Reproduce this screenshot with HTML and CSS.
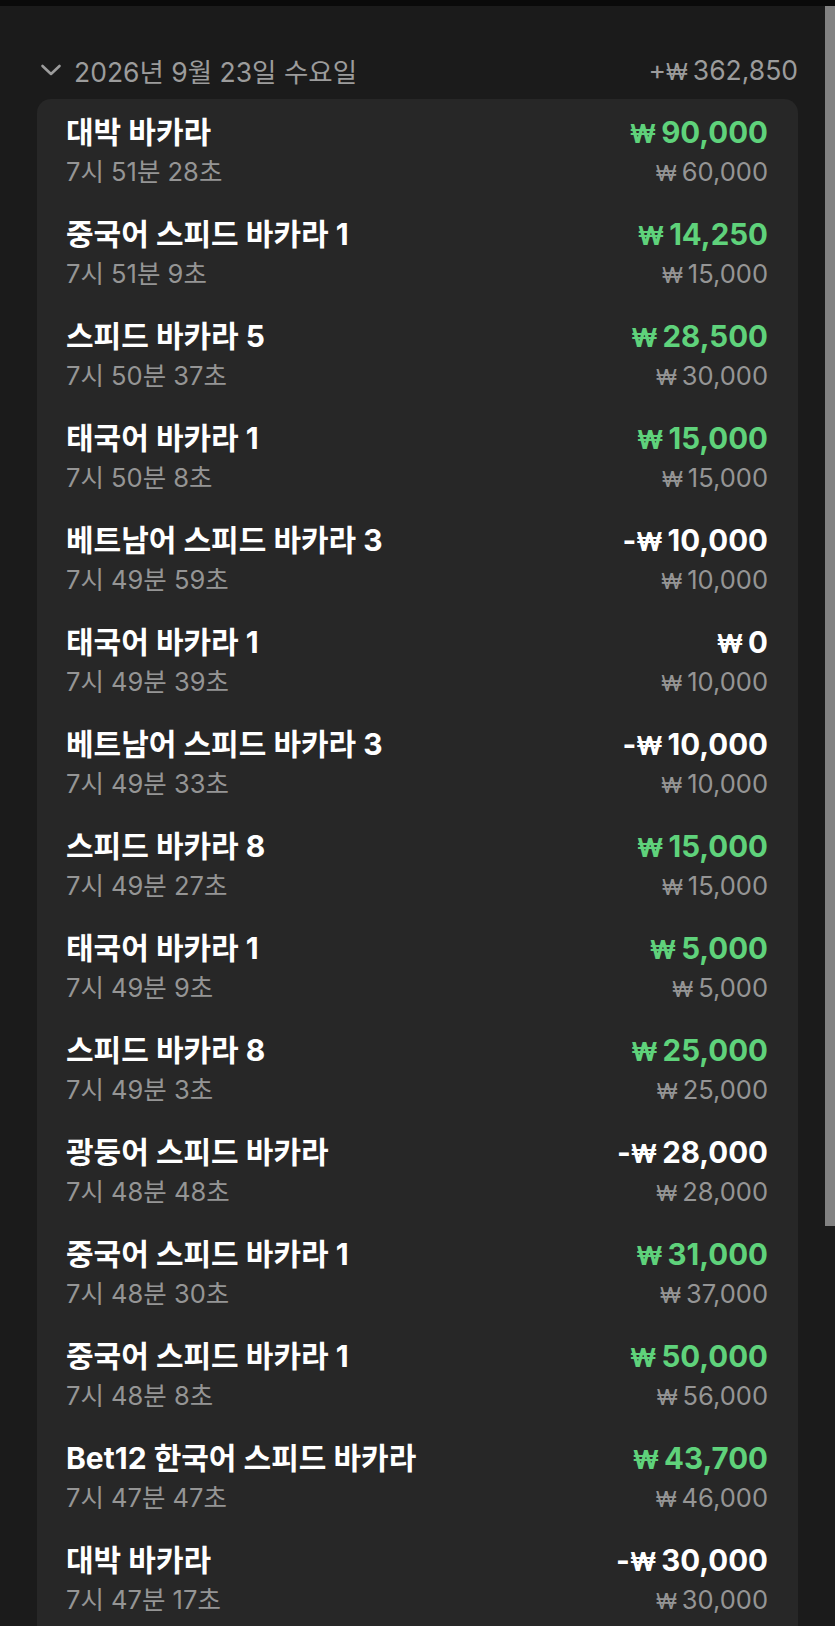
FILE: index.html
```html
<!DOCTYPE html>
<html lang="ko">
<head>
<meta charset="utf-8">
<link rel="stylesheet" href="styles.css">
</head>
<body>
<div class="topbar"></div>
<main class="page">
  <header class="day-head">
    <div class="day-left">
      <svg class="chev" width="22" height="14" viewBox="0 0 22 14"><polyline points="2.5,3 11,11 19.5,3" fill="none" stroke="#9c9c9c" stroke-width="2.6" stroke-linecap="round" stroke-linejoin="round"/></svg>
      <span class="day-date">2026년 9월 23일 수요일</span>
    </div>
    <span class="day-total">+<span class="won">₩</span>362,850</span>
  </header>
  <section class="card">
    <div class="row"><div class="l"><div class="title">대박 바카라</div><div class="time">7시 51분 28초</div></div><div class="r"><div class="amt win"><span class="won">₩</span>90,000</div><div class="bet"><span class="won">₩</span>60,000</div></div></div>
    <div class="row"><div class="l"><div class="title">중국어 스피드 바카라 1</div><div class="time">7시 51분 9초</div></div><div class="r"><div class="amt win"><span class="won">₩</span>14,250</div><div class="bet"><span class="won">₩</span>15,000</div></div></div>
    <div class="row"><div class="l"><div class="title">스피드 바카라 5</div><div class="time">7시 50분 37초</div></div><div class="r"><div class="amt win"><span class="won">₩</span>28,500</div><div class="bet"><span class="won">₩</span>30,000</div></div></div>
    <div class="row"><div class="l"><div class="title">태국어 바카라 1</div><div class="time">7시 50분 8초</div></div><div class="r"><div class="amt win"><span class="won">₩</span>15,000</div><div class="bet"><span class="won">₩</span>15,000</div></div></div>
    <div class="row"><div class="l"><div class="title">베트남어 스피드 바카라 3</div><div class="time">7시 49분 59초</div></div><div class="r"><div class="amt">-<span class="won">₩</span>10,000</div><div class="bet"><span class="won">₩</span>10,000</div></div></div>
    <div class="row"><div class="l"><div class="title">태국어 바카라 1</div><div class="time">7시 49분 39초</div></div><div class="r"><div class="amt"><span class="won">₩</span>0</div><div class="bet"><span class="won">₩</span>10,000</div></div></div>
    <div class="row"><div class="l"><div class="title">베트남어 스피드 바카라 3</div><div class="time">7시 49분 33초</div></div><div class="r"><div class="amt">-<span class="won">₩</span>10,000</div><div class="bet"><span class="won">₩</span>10,000</div></div></div>
    <div class="row"><div class="l"><div class="title">스피드 바카라 8</div><div class="time">7시 49분 27초</div></div><div class="r"><div class="amt win"><span class="won">₩</span>15,000</div><div class="bet"><span class="won">₩</span>15,000</div></div></div>
    <div class="row"><div class="l"><div class="title">태국어 바카라 1</div><div class="time">7시 49분 9초</div></div><div class="r"><div class="amt win"><span class="won">₩</span>5,000</div><div class="bet"><span class="won">₩</span>5,000</div></div></div>
    <div class="row"><div class="l"><div class="title">스피드 바카라 8</div><div class="time">7시 49분 3초</div></div><div class="r"><div class="amt win"><span class="won">₩</span>25,000</div><div class="bet"><span class="won">₩</span>25,000</div></div></div>
    <div class="row"><div class="l"><div class="title">광둥어 스피드 바카라</div><div class="time">7시 48분 48초</div></div><div class="r"><div class="amt">-<span class="won">₩</span>28,000</div><div class="bet"><span class="won">₩</span>28,000</div></div></div>
    <div class="row"><div class="l"><div class="title">중국어 스피드 바카라 1</div><div class="time">7시 48분 30초</div></div><div class="r"><div class="amt win"><span class="won">₩</span>31,000</div><div class="bet"><span class="won">₩</span>37,000</div></div></div>
    <div class="row"><div class="l"><div class="title">중국어 스피드 바카라 1</div><div class="time">7시 48분 8초</div></div><div class="r"><div class="amt win"><span class="won">₩</span>50,000</div><div class="bet"><span class="won">₩</span>56,000</div></div></div>
    <div class="row"><div class="l"><div class="title">Bet12 한국어 스피드 바카라</div><div class="time">7시 47분 47초</div></div><div class="r"><div class="amt win"><span class="won">₩</span>43,700</div><div class="bet"><span class="won">₩</span>46,000</div></div></div>
    <div class="row"><div class="l"><div class="title">대박 바카라</div><div class="time">7시 47분 17초</div></div><div class="r"><div class="amt">-<span class="won">₩</span>30,000</div><div class="bet"><span class="won">₩</span>30,000</div></div></div>
  </section>
</main>
<div class="scrollbar"></div>
</body>
</html>
```

FILE: styles.css
```css
html, body {
  margin: 0;
  padding: 0;
  height: 1626px;
  overflow: hidden;
  background: #1b1b1b;
  font-family: Inter, "Noto Sans CJK KR", sans-serif;
  color: #ffffff;
}

.topbar {
  height: 6px;
  background: #0a0a0a;
}

.page {
  padding: 0 37px;
}

.day-head {
  display: flex;
  justify-content: space-between;
  align-items: center;
  height: 40px;
  margin-top: 44px;
  margin-bottom: 9px;
  color: #9c9c9c;
  font-size: 26.5px;
}

.day-left {
  display: flex;
  align-items: center;
  gap: 12px;
  padding-left: 3px;
}

.chev {
  display: block;
}

.won {
  display: inline-block;
  margin-right: 5px;
  font-size: 0.86em;
}

.card {
  background: #272727;
  border-radius: 14px;
  padding: 0 30px 40px 29px;
}

.row {
  display: flex;
  justify-content: space-between;
  padding: 13px 0 9px;
}

.title, .amt {
  height: 40px;
  line-height: 40px;
  font-weight: 700;
  font-size: 30px;
  white-space: nowrap;
}

.amt {
  font-size: 29.5px;
  text-align: right;
}

.amt.win {
  color: #5fd27b;
}

.time, .bet {
  height: 40px;
  line-height: 40px;
  font-size: 25.5px;
  color: #959595;
  white-space: nowrap;
}

.bet {
  text-align: right;
}

.r {
  display: flex;
  flex-direction: column;
  align-items: flex-end;
}

.scrollbar {
  position: absolute;
  top: 6px;
  right: 0;
  width: 10px;
  height: 1220px;
  background: #828282;
}
```
